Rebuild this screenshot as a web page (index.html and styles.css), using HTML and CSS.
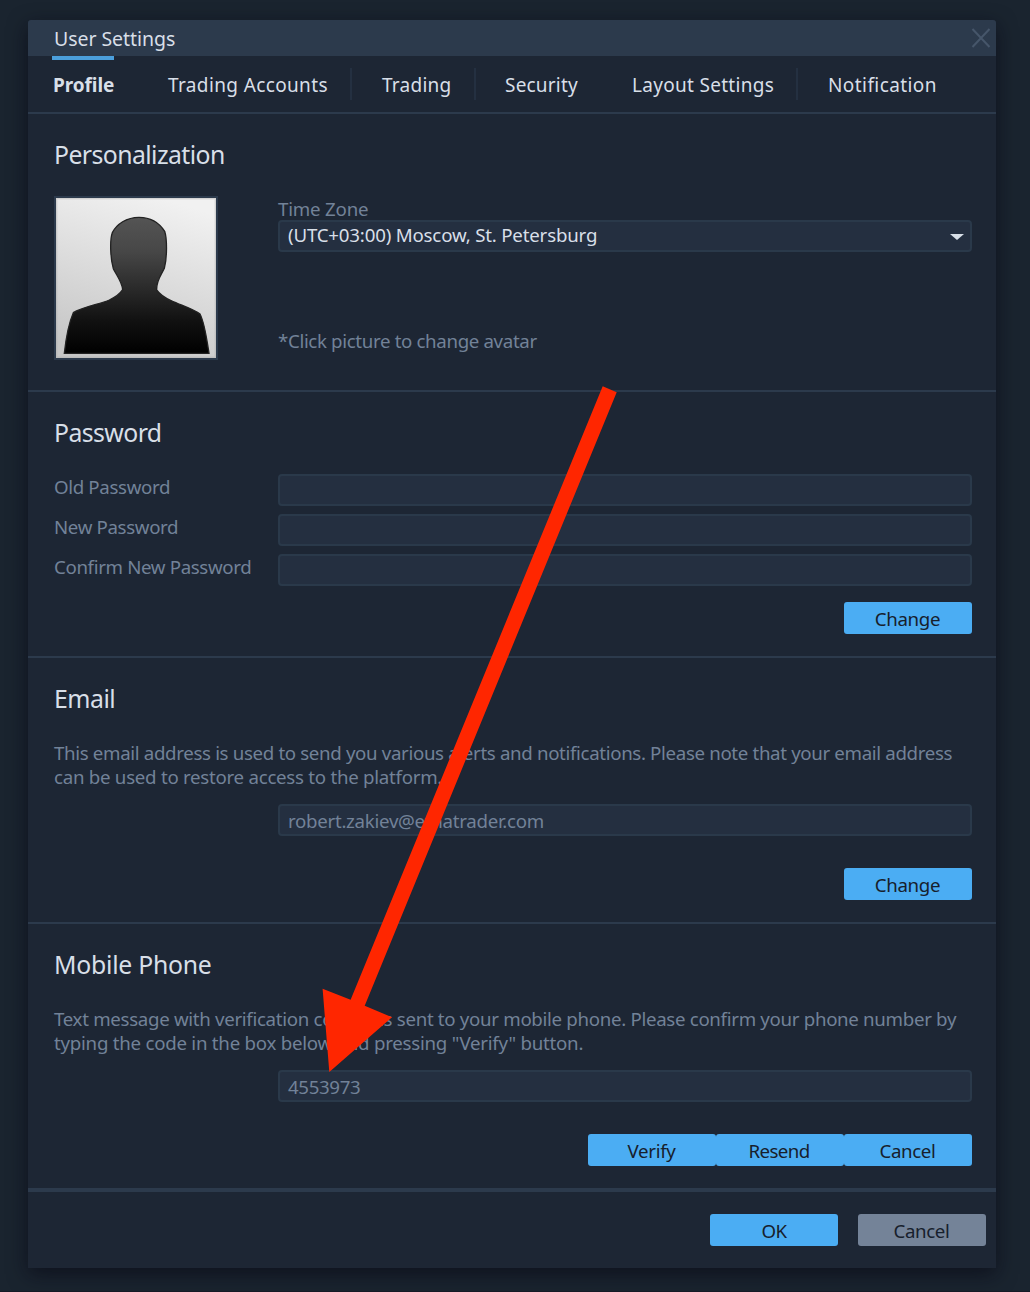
FILE: index.html
```html
<!DOCTYPE html>
<html lang="en">
<head>
<meta charset="utf-8">
<title>User Settings</title>
<link rel="stylesheet" href="styles.css">
</head>
<body>
<main class="dialog">
  <header class="titlebar">
    <h1 class="title">User Settings</h1>
    <svg class="close" viewBox="0 0 20 20" width="20" height="20" aria-label="Close"><path d="M1.5 1 18.5 19M18.5 1 1.5 19" fill="none" stroke="#46566a" stroke-width="2"/></svg>
  </header>
  <nav class="tabs">
    <a class="tab tab-profile active">Profile</a>
    <a class="tab tab-accounts divided">Trading Accounts</a>
    <a class="tab tab-trading divided">Trading</a>
    <a class="tab tab-security">Security</a>
    <a class="tab tab-layout divided">Layout Settings</a>
    <a class="tab tab-notification">Notification</a>
  </nav>

  <section class="section">
    <h2 class="heading tight">Personalization</h2>
    <div class="personal">
      <svg class="avatar" viewBox="48 54 480 480" role="img" aria-label="Avatar">
        <defs>
          <linearGradient id="paper" x1="0.65" y1="0" x2="0.35" y2="1"><stop offset="0" stop-color="#f1f1f1"/><stop offset="1" stop-color="#c6c6c6"/></linearGradient>
          <linearGradient id="figure" x1="0" y1="0" x2="0" y2="1"><stop offset="0" stop-color="#545454"/><stop offset="0.25" stop-color="#474747"/><stop offset="0.75" stop-color="#121212"/><stop offset="1" stop-color="#000"/></linearGradient>
          <filter id="soft" x="-5%" y="-5%" width="110%" height="110%" color-interpolation-filters="sRGB"><feGaussianBlur stdDeviation="1.8"/></filter>
        </defs>
        <rect x="48" y="54" width="480" height="480" fill="url(#paper)"/>
        <rect x="50" y="56" width="476" height="476" fill="none" stroke="#aaa" stroke-opacity=".4" stroke-width="4"/>
        <path filter="url(#soft)" d="M297 112C335 112 360 132 374 154C381 175 382 230 373 265C364 285 349 300 350 330C364 350 380 356 396 363C425 376 460 387 480 402C494 430 500 475 507 520H73C78 475 85 432 100 398C125 382 180 372 208 360C225 352 239 343 248 329C246 305 229 285 220 266C211 235 209 180 217 158C230 132 260 112 297 112Z" fill="url(#figure)" stroke="#222" stroke-width="4"/>
      </svg>
      <div class="personal-fields">
        <div class="field-label">Time Zone</div>
        <div class="input select"><span>(UTC+03:00) Moscow, St. Petersburg</span>
          <svg width="14" height="6" viewBox="0 0 14 6"><path d="M0 0H14L7 6Z" fill="#d8dfe8"/></svg>
        </div>
        <div class="hint">*Click picture to change avatar</div>
      </div>
    </div>
  </section>

  <section class="section">
    <h2 class="heading tight">Password</h2>
    <div class="rows">
      <div class="row"><label class="label">Old Password</label><div class="input"></div></div>
      <div class="row"><label class="label">New Password</label><div class="input"></div></div>
      <div class="row"><label class="label">Confirm New Password</label><div class="input"></div></div>
    </div>
    <div class="actions near"><button class="btn">Change</button></div>
  </section>

  <section class="section">
    <h2 class="heading">Email</h2>
    <p class="text">This email address is used to send you various alerts and notifications. Please note that your email address<br><span class="text-end">can be used to restore access to the platform.</span></p>
    <div class="input indented email">robert.zakiev@etnatrader.com</div>
    <div class="actions"><button class="btn">Change</button></div>
  </section>

  <section class="section last">
    <h2 class="heading phone">Mobile Phone</h2>
    <p class="text wide">Text message with verification code was sent to your mobile phone. Please confirm your phone number by<br><span class="text-end">typing the code in the box below and pressing "Verify" button.</span></p>
    <div class="input indented code">4553973</div>
    <div class="actions"><button class="btn">Verify</button><button class="btn resend">Resend</button><button class="btn">Cancel</button></div>
  </section>

  <footer class="footer"><button class="btn ok">OK</button><button class="btn secondary">Cancel</button></footer>
</main>
<svg class="pointer" width="1030" height="1292" viewBox="0 0 1030 1292"><path d="M602.7 386.3 616.7 392.2 364.7 1005.7 392 1017.2 329.3 1072 322.6 988.7 350.6 999.8Z" fill="#ff2600"/></svg>
</body>
</html>
```

FILE: styles.css
```css
* { box-sizing: border-box; }

body {
  position: relative;
  margin: 0;
  height: 1292px;
  padding: 20px 34px 0 28px;
  overflow: hidden;
  background: #1a242f;
  border-bottom: 1px solid #161a26;
  color: #d8dfe8;
  font: 18.7px/24px "Noto Sans", "Open Sans", sans-serif;
  letter-spacing: -0.35px;
}

.dialog {
  height: 1248px;
  background: #1d2634;
  border-radius: 3px 3px 0 0;
  box-shadow: 0 6px 20px rgba(8, 8, 20, 0.65);
}

.titlebar {
  display: flex;
  align-items: center;
  justify-content: space-between;
  height: 36px;
  padding: 0 5px 0 26px;
  background: #2c3a4c;
  border-radius: 3px 3px 0 0;
}
.title { margin: 0; padding-top: 2px; font-size: 19.5px; font-weight: 400; letter-spacing: -0.05px; }
.close { display: block; }

.tabs {
  display: flex;
  height: 58px;
  padding: 0 24px;
  border-bottom: 2px solid #2c3a4c;
  font-size: 19px;
  letter-spacing: 0.37px;
}
.tab { position: relative; height: 56px; line-height: 59px; white-space: nowrap; }
.tab-profile { width: 86px; padding-left: 1px; font-weight: 700; letter-spacing: -0.08px; }
.active::before {
  content: "";
  position: absolute;
  top: 0;
  left: 0;
  width: 62px;
  height: 4px;
  background: #4b9fdc;
}
.tab-accounts { width: 214px; padding-left: 30px; }
.tab-trading { width: 124px; padding-left: 30px; letter-spacing: 0.25px; }
.tab-security { width: 126px; padding-left: 29px; letter-spacing: 0.2px; }
.tab-layout { width: 196px; padding-left: 30px; letter-spacing: 0.3px; }
.tab-notification { padding-left: 30px; letter-spacing: 0.42px; }
.divided::after {
  content: "";
  position: absolute;
  top: 12px;
  right: 0;
  width: 2px;
  height: 32px;
  background: #243041;
}

.section { padding: 24px 24px 0 26px; height: 266px; border-bottom: 2px solid #2c3a4c; }
.section:first-of-type { height: 278px; }
.section.last { height: 268px; border-bottom-width: 4px; }

.heading {
  margin: 0 0 26px;
  font-size: 24.8px;
  font-weight: 400;
  line-height: 33px;
  letter-spacing: -0.5px;
}
.heading.tight { margin-bottom: 25px; letter-spacing: -0.58px; }
.heading.phone { letter-spacing: -0.25px; }

.personal { display: flex; }
.avatar { width: 164px; height: 164px; border: 2px solid #2c3a4c; flex: none; }
.personal-fields { flex: 1; margin-left: 60px; color: #728298; }
.field-label { padding-top: 1px; letter-spacing: -0.2px; }
.hint { margin-top: 76px; line-height: 26px; }

.input {
  flex: 1;
  height: 32px;
  padding: 0 8px;
  line-height: 29px;
  background: #242f40;
  border: 2px solid #2a394a;
  border-radius: 4px;
  color: #728298;
}
.select {
  display: flex;
  align-items: center;
  justify-content: space-between;
  margin-top: -1px;
  padding-right: 6px;
  color: #d8dfe8;
  letter-spacing: -0.19px;
}
.select span { margin-top: -3px; }
.select svg { margin-top: 2px; }
.indented { margin-left: 224px; }
.email { letter-spacing: -0.29px; }

.rows { display: grid; gap: 8px; }
.row { display: flex; }
.label { width: 224px; padding-top: 1px; color: #728298; }

.text { margin: 0 0 15px; color: #728298; white-space: nowrap; letter-spacing: -0.345px; }
.text.wide { letter-spacing: -0.315px; }
.text-end { letter-spacing: -0.27px; }
.text.wide .text-end { letter-spacing: -0.25px; }

.actions { display: flex; justify-content: flex-end; margin-top: 32px; }
.actions.near { margin-top: 16px; }

.btn {
  width: 128px;
  height: 32px;
  margin: 0;
  padding: 1px 1px 0 0;
  border: 0;
  border-radius: 3px;
  background: #4badf3;
  color: #17202c;
  font: inherit;
  letter-spacing: -0.35px;
}
.btn.resend { padding-right: 2px; letter-spacing: -0.6px; }
.btn.ok { padding-right: 0; letter-spacing: -0.5px; }
.btn.secondary { background: #748398; }

.footer { display: flex; justify-content: flex-end; gap: 20px; padding: 22px 10px 0 0; }

.pointer { position: absolute; top: 0; left: 0; pointer-events: none; }
```
